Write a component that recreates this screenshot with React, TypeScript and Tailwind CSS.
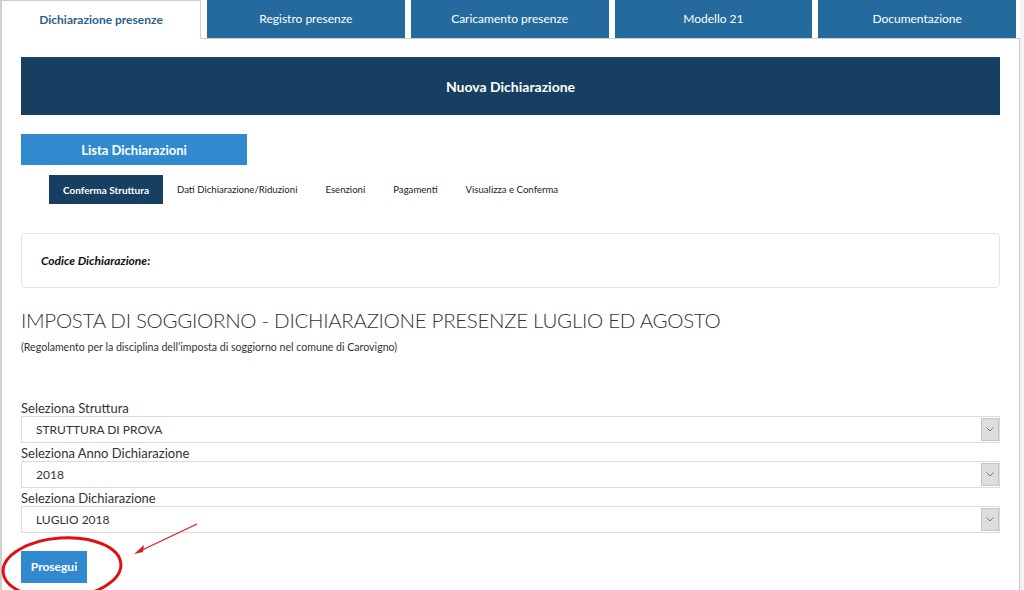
import React from 'react';

const tabs = ['Dichiarazione presenze', 'Registro presenze', 'Caricamento presenze', 'Modello 21', 'Documentazione'];
const steps = ['Conferma Struttura', 'Dati Dichiarazione/Riduzioni', 'Esenzioni', 'Pagamenti', 'Visualizza e Conferma'];

function SelectField({ label, value }: { label: string; value: string }) {
  return (
    <div className="flex flex-col">
      <label className="text-[13px] leading-[18px] text-[#333] h-[18px] pt-[1px]">{label}</label>
      <div className="flex h-[27px] border border-[#dcdcdc] bg-white">
        <span className="flex-1 pl-[14px] text-[12px] leading-[25px] text-[#333]">{value}</span>
        <span className="w-[18px] my-[1px] bg-[#dddddd] border border-[#c4c4c4] flex items-center justify-center">
          <svg width="8" height="5" viewBox="0 0 8 5" fill="none">
            <path d="M0.5 0.5 L4 4 L7.5 0.5" stroke="#777" strokeWidth="1" />
          </svg>
        </span>
      </div>
    </div>
  );
}

export default function App() {
  return (
    <div className="relative w-[1024px] h-[590px] overflow-hidden bg-[#f3f3f3] font-['Lato',sans-serif] text-[#333]">
      <div className="w-[1020px] h-full bg-white border-l-2 border-[#d0d0d0] flex flex-col">
        {/* tabs */}
        <div className="flex h-[39px] shrink-0">
          {tabs.map((t, i) =>
            i === 0 ? (
              <div key={t} className="w-[199px] bg-white border-r border-t border-[#cfcfcf] flex items-center justify-center text-[12px] font-bold text-[#2b5f8c]">
                {t}
              </div>
            ) : (
              <div key={t} className="flex-1 flex border-b border-[#d0d0d0]">
                <div className="flex-1 ml-[6px] bg-[#246a9c] flex items-center justify-center text-[12px] text-white">{t}</div>
              </div>
            )
          )}
          <div className="w-[4px] border-b border-[#d0d0d0]" />
        </div>

        {/* panel */}
        <div className="flex-1 border-r border-[#c8c8c8] px-[19px] pt-[18px]">
          <div className="h-[58px] bg-[#173f62] flex items-center justify-center text-white text-[14px] font-bold">
            Nuova Dichiarazione
          </div>

          <div className="mt-[19px] w-[226px] h-[31px] bg-[#3189d0] flex items-center justify-center text-white text-[13px] font-bold pt-[2px]">
            Lista Dichiarazioni
          </div>

          <div className="mt-[10px] pl-[28px] flex items-center h-[29px] text-[9.6px]">
            {steps.map((s, i) =>
              i === 0 ? (
                <div key={s} className="h-full px-[14px] bg-[#173f62] text-white font-bold flex items-center text-[10px] pt-[1px]">{s}</div>
              ) : (
                <div key={s} className="px-[14px] text-[#222] pt-[2px]">{s}</div>
              )
            )}
          </div>

          <div className="mt-[29px] h-[55px] border border-[#e3e3e3] rounded-[5px] flex items-center px-[19px]">
            <span className="text-[12px] font-bold italic text-[#111]">Codice Dichiarazione:</span>
          </div>

          <h1 className="mt-[19px] text-[20.5px] leading-[26px] font-light text-[#333] tracking-[-0.3px]">
            IMPOSTA DI SOGGIORNO - DICHIARAZIONE PRESENZE LUGLIO ED AGOSTO
          </h1>
          <p className="mt-[7px] text-[10.6px] text-[#333]">
            (Regolamento per la disciplina dell’imposta di soggiorno nel comune di Carovigno)
          </p>

          <div className="mt-[42px] flex flex-col">
            <SelectField label="Seleziona Struttura" value="STRUTTURA DI PROVA" />
            <SelectField label="Seleziona Anno Dichiarazione" value="2018" />
            <SelectField label="Seleziona Dichiarazione" value="LUGLIO 2018" />
          </div>

          <button className="mt-[18px] w-[66px] h-[32px] bg-[#3189d0] text-white text-[12px] font-bold">Prosegui</button>
        </div>
      </div>

      {/* annotation */}
      <svg className="absolute left-0 top-0 pointer-events-none" width="1024" height="590">
        <ellipse cx="62" cy="568" rx="59" ry="30" fill="none" stroke="#e01010" strokeWidth="3" transform="rotate(-4 62 568)" />
        <line x1="197" y1="524" x2="140" y2="551" stroke="#d42020" strokeWidth="1.3" />
        <path d="M134 554 L144 545 L143 552 Z" fill="#d42020" />
      </svg>
    </div>
  );
}
